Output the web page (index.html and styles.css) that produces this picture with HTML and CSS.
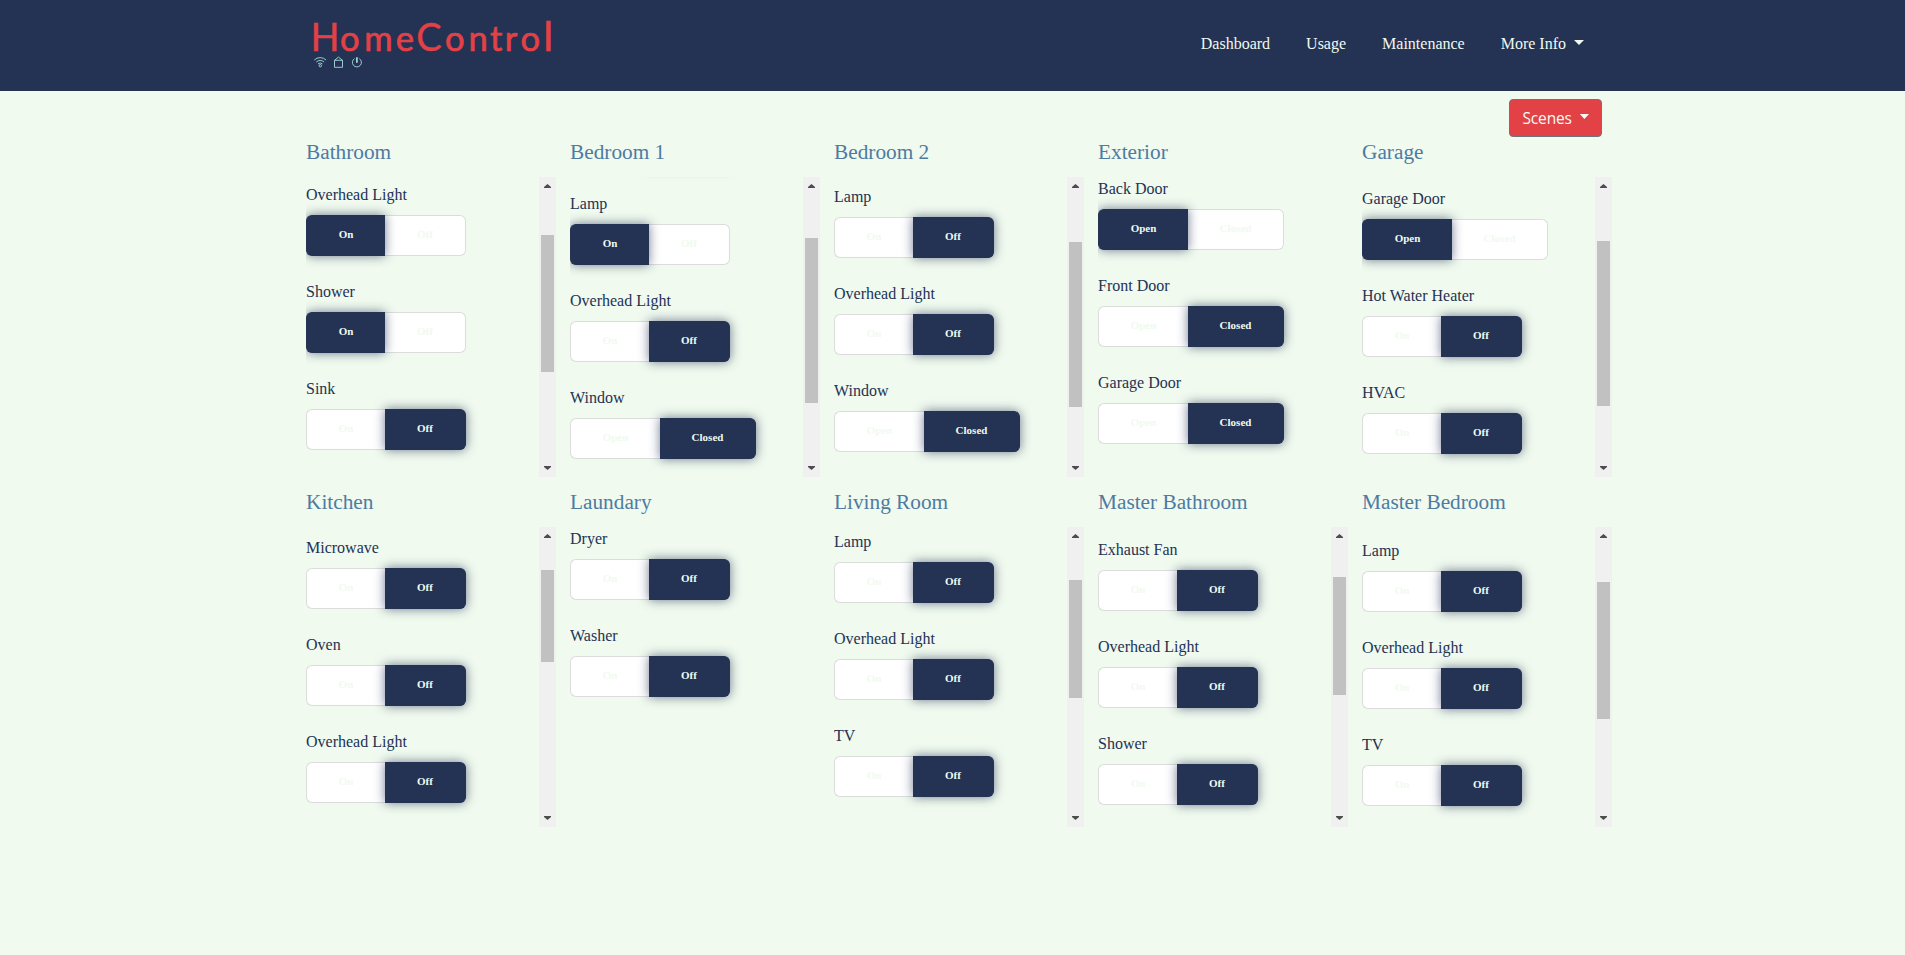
FILE: index.html
```html
<!DOCTYPE html>
<html lang="en">
<head>
<meta charset="utf-8">
<title>HomeControl</title>
<link rel="stylesheet" href="styles.css">
</head>
<body>
<header class="topbar">
  <div class="bar-inner">
    <svg class="logo" width="250" height="60" viewBox="306 12 250 60" role="img" aria-label="HomeControl">
      <text class="logo-text" y="51" x="310.6 340 364.3 395.7 416.3 444.9 468.400 490 504.7 520.600 543.6"><tspan class="cap">H</tspan>ome<tspan class="cap">C</tspan>ontro<tspan class="tall">l</tspan></text>
      <g class="logo-icons" fill="none" stroke="#a8dadc" stroke-width="0.9">
        <path d="M314.3 60a8.500 8.500 0 0 1 11.800 0M316.300 62a5.700 5.700 0 0 1 7.800 0M318 63.900a3.300 3.300 0 0 1 4.400 0"/>
        <circle cx="320.300" cy="65.700" r="1.200"/>
        <path d="M334.500 60.300h8v7h-8zM334.500 60.300l4-3.200 4 3.200"/>
        <path d="M354.500 58.600a4.500 4.500 0 1 0 4.800 0"/>
        <path d="M356.900 57.200v5.600" stroke-width="1.700"/>
      </g>
    </svg>
    <nav class="nav">
      <a>Dashboard</a><a>Usage</a><a>Maintenance</a><a class="more">More Info<i class="caret"></i></a>
    </nav>
  </div>
</header>
<main class="page">
  <div class="actions"><button class="scenes">Scenes<i class="caret"></i></button></div>
  <div class="rooms" id="rooms"></div>
</main>
<script src="rooms.js"></script>
</body>
</html>
```
FILE: styles.css
```css
* { box-sizing: border-box; }
body {
  margin: 0;
  min-height: 955px;
  background: #f0faef;
  color: #243254;
  font-family: "Liberation Serif", "Times New Roman", serif;
  font-size: 16px;
  line-height: 24px;
  overflow: hidden;
}
.topbar { height: 91px; background: #243254; }
.bar-inner {
  width: 1293px;
  margin-left: 306px;
  display: flex;
  justify-content: space-between;
  align-items: flex-start;
}
.logo { display: block; margin-top: 12px; }
.logo-text {
  font-family: Lato, sans-serif;
  font-size: 34.5px;
  fill: #e24146;
  stroke: #e24146;
  stroke-width: 0.7px;
}
.cap { font-size: 38px; stroke-width: 0.4px; }
.tall { font-size: 40px; stroke-width: 0.7px; }
.nav { display: flex; gap: 36px; padding: 32px 15px 0 0; color: #f0faef; }
.more { display: flex; white-space: nowrap; }
.caret {
  width: 10px;
  height: 5px;
  margin: 8px 0 0 8px;
  background: currentColor;
  clip-path: polygon(0 0, 100% 0, 50% 100%);
}
.actions { display: flex; height: 38px; margin: 8px 303px 0 0; justify-content: flex-end; }
.scenes {
  display: flex;
  width: 93px;
  height: 38px;
  padding: 6px 12px 0 12.500px;
  border: 1px solid #6c757d;
  border-radius: 4px;
  background: #e24146;
  color: #f7fbf5;
  font: 15.5px/25px "Open Sans", sans-serif;
  letter-spacing: -0.15px;
}
.rooms {
  display: grid;
  grid-template-columns: repeat(5, 250px);
  gap: 0 14px;
  padding-left: 306px;
}
.room { height: 350px; }
.room-name {
  margin: 0;
  height: 40px;
  padding-top: 3px;
  font-size: 21.3px;
  font-weight: 400;
  line-height: 24px;
  color: #4d7ba2;
}
.room-body { display: flex; height: 300px; overflow: hidden; }
.devices { flex: 1; overflow: hidden; height: 300px; }
.label { height: 24px; margin-bottom: 8px; }
.switch { display: flex; height: 41px; margin-bottom: 24px; }
.opt {
  padding: 9px 0 0;
  text-align: center;
  font-size: 11px;
  font-weight: 700;
  line-height: 18px;
  background: #fff;
  color: #f0faef;
  border: 1px solid #dcdcdc;
}
.opt:first-child { border-right: 0; border-radius: 6px 0 0 6px; }
.opt:last-child { border-left: 0; border-radius: 0 6px 6px 0; }
.on { width: 79px; }
.off { width: 81px; }
.open { width: 90px; }
.closed { width: 96px; }
.active {
  position: relative;
  background: #243254;
  border-color: #243254;
  box-shadow: 0 0 11px rgba(36, 50, 84, 0.65);
}
.previous { height: 41px; margin: -65px 0 24px; }
.scrollbar {
  display: flex;
  flex-direction: column;
  width: 17px;
  background: #f1f0f1;
}
.up, .down {
  width: 7px;
  height: 4px;
  margin: 7px auto 0 5px;
  background: #4d4d4d;
  clip-path: polygon(0 100%, 0 75%, 50% 0, 100% 75%, 100% 100%);
}
.down { margin: auto auto 7px 5px; transform: rotate(180deg); }
.thumb { width: 13px; margin-left: 2px; background: #c1c1c1; }
```
FILE: rooms.js
```js
// Each device: [label, kind, active option index]; bar: [thumb top, thumb height]
const kinds = { power: ["On", "Off"], door: ["Open", "Closed"] };
const rooms = [
  { name: "Bathroom", shift: 6, bar: [58, 137], items: [["Overhead Light", "power", 0], ["Shower", "power", 0], ["Sink", "power", 1]] },
  { name: "Bedroom 1", shift: 15, bar: [61, 165], previous: true, items: [["Lamp", "power", 0], ["Overhead Light", "power", 1], ["Window", "door", 1]] },
  { name: "Bedroom 2", shift: 8, bar: [65, 165], items: [["Lamp", "power", 1], ["Overhead Light", "power", 1], ["Window", "door", 1]] },
  { name: "Exterior", shift: 0, items: [["Back Door", "door", 0], ["Front Door", "door", 1], ["Garage Door", "door", 1]] },
  { name: "Garage", shift: 10, bar: [64, 165], items: [["Garage Door", "door", 0], ["Hot Water Heater", "power", 1], ["HVAC", "power", 1]] },
  { name: "Kitchen", shift: 9, bar: [43, 92], items: [["Microwave", "power", 1], ["Oven", "power", 1], ["Overhead Light", "power", 1]] },
  { name: "Laundary", shift: 0, items: [["Dryer", "power", 1], ["Washer", "power", 1]] },
  { name: "Living Room", shift: 3, bar: [53, 118], items: [["Lamp", "power", 1], ["Overhead Light", "power", 1], ["TV", "power", 1]] },
  { name: "Master Bathroom", shift: 11, bar: [50, 118], items: [["Exhaust Fan", "power", 1], ["Overhead Light", "power", 1], ["Shower", "power", 1]] },
  { name: "Master Bedroom", shift: 12, bar: [55, 137], items: [["Lamp", "power", 1], ["Overhead Light", "power", 1], ["TV", "power", 1]] }
];
const option = (text, active) =>
  `<div class="opt ${text.toLowerCase()}${active ? " active" : ""}">${text}</div>`;
const device = ([label, kind, active]) =>
  `<div class="label">${label}</div><div class="switch">${kinds[kind].map((t, i) => option(t, i === active)).join("")}</div>`;
const scrollbar = ([top, height]) =>
  `<div class="scrollbar"><i class="up"></i><i class="thumb" style="margin-top:${top - 11}px;height:${height}px"></i><i class="down"></i></div>`;
document.getElementById("rooms").innerHTML = rooms.map(r =>
  `<section class="room"><h2 class="room-name">${r.name}</h2><div class="room-body">
   <div class="devices" style="padding-top:${r.shift}px">${r.previous ? '<div class="switch previous"><div class="opt on"></div><div class="opt off active"></div></div>' : ""}${r.items.map(device).join("")}</div>
   ${r.bar ? scrollbar(r.bar) : ""}</div></section>`).join("");
```
